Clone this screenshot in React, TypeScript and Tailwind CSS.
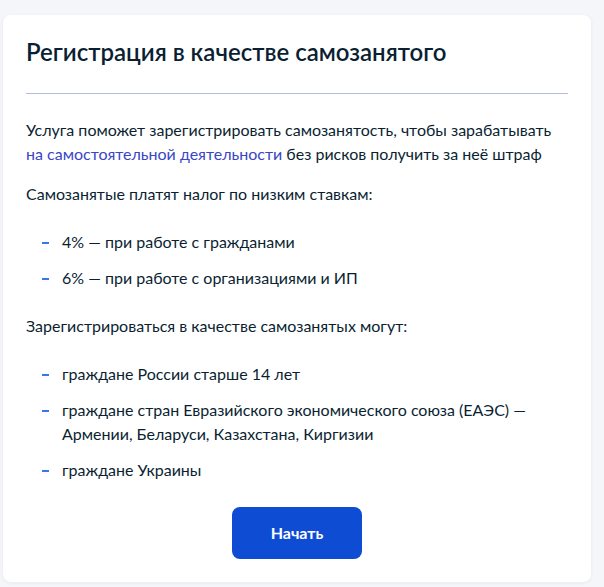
export default function App() {
    const rates = ['4% — при работе с гражданами', '6% — при работе с организациями и ИП'];
    const who = [
        'граждане России старше 14 лет',
        'граждане стран Евразийского экономического союза (ЕАЭС) — Армении, Беларуси, Казахстана, Киргизии',
        'граждане Украины',
    ];

    const Dash = () => (
        <span className="w-[20px] shrink-0 h-[24px] flex items-center">
            <span className="block w-[7px] h-[2px] bg-[#3a74f0] mt-[2px]" />
        </span>
    );

    return (
        <div className="w-[604px] h-[587px] bg-[#f4f6fa] pt-[15px] pl-[3px] pr-[13px] pb-[5px] font-['Lato','Liberation_Sans',sans-serif] text-[#0b1f33]">
            <div className="bg-white rounded-[8px] shadow-[0_1px_4px_rgba(11,31,51,0.06)] h-full px-[23px] pt-[21px]">
                <h1 className="text-[24px] leading-[32px] font-semibold pb-[25px] border-b border-[#b3bce6]">
                    Регистрация в качестве самозанятого
                </h1>

                <p className="mt-[24px] text-[16px] leading-[24px]">
                    Услуга поможет зарегистрировать самозанятость, чтобы зарабатывать{' '}
                    <span className="text-[#3946c7]">на самостоятельной деятельности</span> без рисков получить за неё штраф
                </p>

                <p className="mt-[16px] text-[16px] leading-[24px]">Самозанятые платят налог по низким ставкам:</p>

                <ul className="mt-[24px] flex flex-col gap-[12px] text-[16px] leading-[24px]">
                    {rates.map((t) => (
                        <li key={t} className="flex pl-[16px]">
                            <Dash />
                            <span>{t}</span>
                        </li>
                    ))}
                </ul>

                <p className="mt-[24px] text-[16px] leading-[24px]">Зарегистрироваться в качестве самозанятых могут:</p>

                <ul className="mt-[24px] flex flex-col gap-[12px] text-[16px] leading-[24px]">
                    {who.map((t) => (
                        <li key={t} className="flex pl-[16px]">
                            <Dash />
                            <span className="max-w-[510px]">{t}</span>
                        </li>
                    ))}
                </ul>

                <div className="flex justify-center mt-[25px]">
                    <button className="w-[130px] h-[52px] rounded-[8px] bg-[#0d4cd3] text-white text-[16px] font-bold">
                        Начать
                    </button>
                </div>
            </div>
        </div>
    );
}
